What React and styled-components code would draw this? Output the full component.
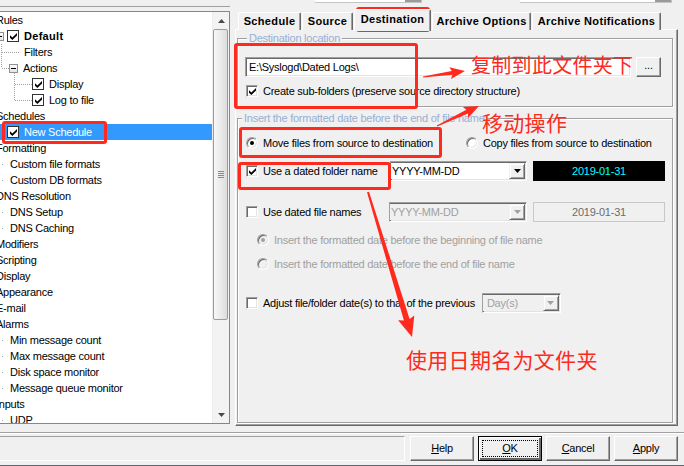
import React from "react";
import styled, { createGlobalStyle } from "styled-components";

const RED = "#ff2a1e";

const GlobalStyle = createGlobalStyle`
  html, body {
    margin: 0;
    padding: 0;
    background: #f0f0f0;
  }
  body {
    font-family: "Liberation Sans", Arial, sans-serif;
    font-size: 11px;
    letter-spacing: -0.25px;
    color: #000;
  }
  * {
    box-sizing: border-box;
  }
`;

const Window = styled.div`
  position: relative;
  width: 684px;
  height: 466px;
  overflow: hidden;
  background: #f0f0f0;
  display: flex;
  flex-direction: column;
`;

const Main = styled.div`
  display: flex;
  height: 426px;
`;

/* ---------- left tree ---------- */

const LeftColumn = styled.div`
  width: 230px;
  display: flex;
  flex-direction: column;
`;

const TopRule = styled.div`
  height: 7px;
  border-bottom: 1px solid #a0a0a0;
  margin-bottom: 4px;
`;

const Tree = styled.div`
  margin-left: -2px;
  width: 232px;
  height: 413px;
  display: flex;
  background: #fff;
  border: 1px solid #828790;
`;

const TreeList = styled.div`
  position: relative;
  flex: 1;
  overflow: hidden;
`;

const TreeRow = styled.div`
  height: 16px;
  display: flex;
  align-items: center;
  white-space: nowrap;
  background: ${(p) => (p.$selected ? "#3399ff" : "transparent")};
  color: ${(p) => (p.$selected ? "#fff" : "#000")};
`;

const Indent = styled.span`
  width: 0;
  margin-left: ${(p) => p.$x}px;
`;

const Expander = styled.span`
  position: relative;
  flex: none;
  width: 9px;
  height: 9px;
  margin-right: ${(p) => p.$gap}px;
  border: 1px solid #919191;
  background: linear-gradient(#fff, #e4e4e4);
  &::after {
    content: "";
    position: absolute;
    left: 1px;
    top: 3px;
    width: 5px;
    height: 1px;
    background: #000;
  }
`;

const TreeCheck = styled.span`
  flex: none;
  width: 12px;
  height: 12px;
  margin-right: 5px;
  border: 1px solid #333;
  background: #fff;
  display: flex;
  align-items: center;
  justify-content: center;
`;

const TreeLabel = styled.span`
  line-height: 16px;
  font-weight: ${(p) => (p.$bold ? "bold" : "normal")};
  letter-spacing: ${(p) => (p.$bold ? "0.3px" : "-0.25px")};
`;

const Guides = styled.svg`
  position: absolute;
  left: 0;
  top: 0;
  pointer-events: none;
`;

const ScrollBar = styled.div`
  width: 17px;
  display: flex;
  flex-direction: column;
  background: #f3f3f3;
  border-left: 1px solid #ececec;
`;

const ScrollArrow = styled.div`
  height: 17px;
  flex: none;
  display: flex;
  align-items: center;
  justify-content: center;
`;

const ScrollTrack = styled.div`
  flex: 1;
  padding: 0 1px 0 0;
`;

const Thumb = styled.div`
  height: 291px;
  border: 1px solid #9b9b9b;
  border-radius: 2px;
  background: linear-gradient(to right, #f7f7f7, #ececec 45%, #dcdcdc);
  display: flex;
  align-items: center;
  justify-content: center;
`;

const Grip = styled.div`
  width: 6px;
  height: 7px;
  background: repeating-linear-gradient(#8a8a8a 0 1px, transparent 1px 2px);
`;

/* ---------- right side ---------- */

const RightColumn = styled.div`
  margin-left: 5px;
  width: 443px;
  display: flex;
  flex-direction: column;
`;

const TopCombos = styled.div`
  height: 8px;
  display: flex;
  align-items: flex-start;
`;

const CutCombo = styled.div`
  margin-left: ${(p) => p.$offset}px;
  width: ${(p) => p.$w}px;
  height: 3px;
  background: #fff;
  border-bottom: 1px solid #c4c4c4;
  border-right: 1px solid #c4c4c4;
  display: flex;
  justify-content: flex-end;
`;

const CutButton = styled.div`
  width: 16px;
  height: 2px;
  background: #9a9a9a;
`;

const TabStrip = styled.div`
  height: 22px;
  display: flex;
  align-items: flex-end;
  gap: 1px;
  padding-left: 3px;
`;

const Tab = styled.div`
  position: relative;
  z-index: ${(p) => (p.$active ? 1 : 0)};
  width: ${(p) => p.$w}px;
  height: ${(p) => (p.$active ? 22 : 18)}px;
  margin-bottom: ${(p) => (p.$active ? -1 : 0)}px;
  padding-top: ${(p) => (p.$active ? 3 : 2)}px;
  background: #f0f0f0;
  border-top: 1px solid #fff;
  border-left: 1px solid #fff;
  border-right: 1px solid #696969;
  border-radius: 2px 2px 0 0;
  box-shadow: inset -1px 0 0 #a0a0a0;
  font-weight: bold;
  letter-spacing: 0.35px;
  text-align: center;
  line-height: 13px;
  white-space: nowrap;
`;

const TabPage = styled.div`
  flex: 1;
  margin-top: -1px;
  border-top: 1px solid #fff;
  border-left: 1px solid #fff;
  border-right: 1px solid #696969;
  border-bottom: 1px solid #696969;
  box-shadow: inset -1px -1px 0 #a0a0a0;
  display: flex;
  flex-direction: column;
  padding: 0 4px 2px 1px;
`;

const Group = styled.div`
  position: relative;
  flex: ${(p) => (p.$grow ? 1 : "none")};
  margin-top: ${(p) => p.$mt}px;
  padding: ${(p) => p.$pad};
  border: 1px solid #a0a0a0;
  box-shadow: inset 1px 1px 0 #fff, 1px 1px 0 #fff;
  display: flex;
  flex-direction: column;
`;

const GroupTitle = styled.span`
  position: absolute;
  top: -8px;
  left: ${(p) => p.$left}px;
  padding: 0 2px;
  background: #f0f0f0;
  color: #97afd4;
  line-height: 14px;
  white-space: nowrap;
`;

const PathRow = styled.div`
  display: flex;
  height: 20px;
  gap: 5px;
`;

const TextField = styled.div`
  width: 386px;
  height: 20px;
  padding: 0 0 0 3px;
  background: #fff;
  border: 1px solid;
  border-color: #a0a0a0 #fff #fff #a0a0a0;
  box-shadow: inset 1px 1px 0 #696969, inset -1px -1px 0 #e3e3e3;
  line-height: 18px;
  white-space: nowrap;
`;

const SmallButton = styled.div`
  width: 25px;
  height: 20px;
  border: 1px solid;
  border-color: #fff #696969 #696969 #fff;
  box-shadow: inset -1px -1px 0 #a0a0a0;
  text-align: center;
  line-height: 15px;
`;

const Row = styled.div`
  display: flex;
  align-items: center;
  height: ${(p) => p.$h || 14}px;
  margin-top: ${(p) => p.$mt || 0}px;
  padding-left: ${(p) => p.$pl || 0}px;
`;

const OptionGrid = styled.div`
  display: grid;
  grid-template-columns: 220px auto;
  align-items: center;
  height: 14px;
`;

const Choice = styled.label`
  flex: none;
  display: flex;
  align-items: center;
  gap: 5px;
  width: ${(p) => (p.$w ? `${p.$w}px` : "auto")};
  color: ${(p) => (p.$disabled ? "#a0a0a0" : "#000")};
  white-space: nowrap;
`;

const CheckBox = styled.span`
  flex: none;
  width: 12px;
  height: 12px;
  background: #fff;
  border: 1px solid;
  border-color: #a0a0a0 #fff #fff #a0a0a0;
  box-shadow: inset 1px 1px 0 #696969, inset -1px -1px 0 #e3e3e3;
  display: flex;
  align-items: center;
  justify-content: center;
`;

const Radio = styled.span`
  position: relative;
  flex: none;
  width: 12px;
  height: 12px;
  border-radius: 50%;
  background: ${(p) => (p.$disabled ? "#f0f0f0" : "#fff")};
  border: 1px solid;
  border-color: #a0a0a0 #fff #fff #a0a0a0;
  box-shadow: inset 1px 1px 0 #696969, inset -1px -1px 0 #e3e3e3;
  &::after {
    content: "";
    display: ${(p) => (p.$on ? "block" : "none")};
    position: absolute;
    left: 3px;
    top: 3px;
    width: 4px;
    height: 4px;
    border-radius: 50%;
    background: ${(p) => (p.$disabled ? "#a0a0a0" : "#000")};
  }
`;

const Combo = styled.div`
  flex: none;
  width: ${(p) => p.$w}px;
  height: 20px;
  margin-left: ${(p) => p.$ml || 0}px;
  display: flex;
  background: ${(p) => (p.$disabled ? "#f0f0f0" : "#fff")};
  border: 1px solid;
  border-color: #a0a0a0 #fff #fff #a0a0a0;
  box-shadow: inset 1px 1px 0 #696969, inset -1px -1px 0 #e3e3e3;
  padding: 1px 1px 1px 0;
`;

const ComboText = styled.span`
  flex: 1;
  padding-left: ${(p) => p.$pl || 1}px;
  line-height: 16px;
  color: ${(p) => (p.$disabled ? "#a0a0a0" : "#000")};
  background: ${(p) => (p.$disabled ? "#f0f0f0" : "#fff")};
  overflow: hidden;
  white-space: nowrap;
`;

const DropButton = styled.span`
  flex: none;
  width: 16px;
  display: flex;
  align-items: center;
  justify-content: center;
  background: #f0f0f0;
  border: 1px solid;
  border-color: #f0f0f0 #696969 #696969 #f0f0f0;
  box-shadow: inset 1px 1px 0 #fff, inset -1px -1px 0 #a0a0a0;
`;

const DateBox = styled.div`
  flex: none;
  width: 132px;
  height: 20px;
  margin-left: 6px;
  background: ${(p) => (p.$active ? "#000" : "#f0f0f0")};
  color: ${(p) => (p.$active ? "#00ffff" : "#6d6d6d")};
  border: 1px solid ${(p) => (p.$active ? "#000" : "#c8c8c8")};
  text-align: center;
  line-height: 18px;
`;

/* ---------- footer ---------- */

const Footer = styled.div`
  flex: 1;
  display: flex;
  flex-direction: column;
`;

const Divider = styled.div`
  margin-top: 6px;
  border-top: 1px solid #a0a0a0;
  border-bottom: 1px solid #fff;
`;

const ButtonRow = styled.div`
  display: flex;
  height: 25px;
  margin-top: 2px;
  gap: 4px;
`;

const StatusBox = styled.div`
  width: 407px;
  margin: 0 1px 0 -2px;
  border: 1px solid;
  border-color: #a0a0a0 #fff #fff #a0a0a0;
`;

const DialogButton = styled.div`
  position: relative;
  width: 64px;
  height: 25px;
  border: 1px solid;
  border-color: ${(p) => (p.$focused ? "#000" : "#fff #696969 #696969 #fff")};
  box-shadow: ${(p) =>
    p.$focused
      ? "inset 1px 1px 0 #fff, inset -2px -2px 0 #696969"
      : "inset -1px -1px 0 #a0a0a0"};
  text-align: center;
  line-height: 22px;
  &::after {
    content: "";
    display: ${(p) => (p.$focused ? "block" : "none")};
    position: absolute;
    inset: 3px 3px 3px 3px;
    border: 1px dotted #000;
  }
`;

const BottomEdge = styled.div`
  margin-top: auto;
  height: 1px;
  background: #5f6670;
`;

/* ---------- red annotations ---------- */

const RedFrame = styled.div`
  position: absolute;
  left: ${(p) => p.$x}px;
  top: ${(p) => p.$y}px;
  width: ${(p) => p.$w}px;
  height: ${(p) => p.$h}px;
  border: 3px solid ${RED};
  border-radius: 3px;
  pointer-events: none;
`;

const RedNote = styled.div`
  position: absolute;
  left: ${(p) => p.$x}px;
  top: ${(p) => p.$y}px;
  font-family: "Noto Sans CJK SC", "Noto Sans", sans-serif;
  font-size: ${(p) => p.$size}px;
  line-height: 1;
  letter-spacing: 0.3px;
  color: ${RED};
  white-space: nowrap;
`;

const ArrowLayer = styled.svg`
  position: absolute;
  left: 0;
  top: 0;
  pointer-events: none;
`;

/* ---------- data ---------- */

const treeItems = [
  { label: "Rules", x: -3 },
  { label: "Default", x: -4, expander: 3, check: true, bold: true },
  { label: "Filters", x: 25 },
  { label: "Actions", x: 10, expander: 5 },
  { label: "Display", x: 33, check: true },
  { label: "Log to file", x: 33, check: true },
  { label: "Schedules", x: -3 },
  { label: "New Schedule", x: 8, check: true, selected: true },
  { label: "Formatting", x: -3 },
  { label: "Custom file formats", x: 11, dot: true },
  { label: "Custom DB formats", x: 11, dot: true },
  { label: "DNS Resolution", x: -3 },
  { label: "DNS Setup", x: 11, dot: true },
  { label: "DNS Caching", x: 11, dot: true },
  { label: "Modifiers", x: -3 },
  { label: "Scripting", x: -3 },
  { label: "Display", x: -3 },
  { label: "Appearance", x: -3 },
  { label: "E-mail", x: -3 },
  { label: "Alarms", x: -3 },
  { label: "Min message count", x: 11, dot: true },
  { label: "Max message count", x: 11, dot: true },
  { label: "Disk space monitor", x: 11, dot: true },
  { label: "Message queue monitor", x: 11, dot: true },
  { label: "Inputs", x: -3 },
  { label: "UDP", x: 11, dot: true },
];

const tabs = [
  { label: "Schedule", w: 63 },
  { label: "Source", w: 51 },
  { label: "Destination", w: 77, active: true },
  { label: "Archive Options", w: 99 },
  { label: "Archive Notifications", w: 129 },
];

function arrowPoints(x1, y1, x2, y2, tail, shaft, head, headLen) {
  const len = Math.hypot(x2 - x1, y2 - y1);
  const ux = (x2 - x1) / len;
  const uy = (y2 - y1) / len;
  const nx = -uy;
  const ny = ux;
  const bx = x2 - ux * headLen;
  const by = y2 - uy * headLen;
  const pts = [
    [x1 + (nx * tail) / 2, y1 + (ny * tail) / 2],
    [bx + (nx * shaft) / 2, by + (ny * shaft) / 2],
    [bx - ux * 2 + (nx * head) / 2, by - uy * 2 + (ny * head) / 2],
    [x2, y2],
    [bx - ux * 2 - (nx * head) / 2, by - uy * 2 - (ny * head) / 2],
    [bx - (nx * shaft) / 2, by - (ny * shaft) / 2],
    [x1 - (nx * tail) / 2, y1 - (ny * tail) / 2],
  ];
  return pts.map((p) => p.map((v) => v.toFixed(1)).join(",")).join(" ");
}

/* ---------- small drawings ---------- */

const CheckMark = ({ color = "#000" }) => (
  <svg width="7" height="7" viewBox="0 0 7 7">
    <polygon points="0,2.3 2.4,4.6 7,0 7,2.4 2.4,7 0,4.7" fill={color} />
  </svg>
);

const DownTriangle = ({ color = "#000" }) => (
  <svg width="7" height="4" viewBox="0 0 7 4">
    <polygon points="0,0 7,0 3.5,4" fill={color} />
  </svg>
);

const UpTriangle = () => (
  <svg width="7" height="4" viewBox="0 0 7 4">
    <polygon points="0,4 7,4 3.5,0" fill="#4a4a4a" />
  </svg>
);

function TreeGuides() {
  const dotted = { stroke: "#a0a0a0", strokeWidth: 1, strokeDasharray: "1 1" };
  const dotRows = treeItems
    .map((item, i) => (item.dot ? i : -1))
    .filter((i) => i >= 0);
  return (
    <Guides width="212" height="411">
      <line x1="2.5" y1="32" x2="2.5" y2="56" {...dotted} />
      <line x1="3" y1="40.5" x2="20" y2="40.5" {...dotted} />
      <line x1="3" y1="56.5" x2="11" y2="56.5" {...dotted} />
      <line x1="15.5" y1="61" x2="15.5" y2="88" {...dotted} />
      <line x1="16" y1="72.5" x2="34" y2="72.5" {...dotted} />
      <line x1="16" y1="88.5" x2="34" y2="88.5" {...dotted} />
      {dotRows.map((i) => (
        <rect key={i} x="3" y={8 + 16 * i} width="1" height="1" fill="#a0a0a0" />
      ))}
    </Guides>
  );
}

function CheckOption({ checked, children, width }) {
  return (
    <Choice $w={width}>
      <CheckBox>{checked && <CheckMark />}</CheckBox>
      <span>{children}</span>
    </Choice>
  );
}

function RadioOption({ on, disabled, children }) {
  return (
    <Choice $disabled={disabled}>
      <Radio $on={on} $disabled={disabled} />
      <span>{children}</span>
    </Choice>
  );
}

function DropDown({ value, width, disabled, ml }) {
  return (
    <Combo $w={width} $disabled={disabled} $ml={ml}>
      <ComboText $disabled={disabled} $pl={ml ? 4 : 1}>
        {value}
      </ComboText>
      <DropButton>
        <DownTriangle color={disabled ? "#a0a0a0" : "#000"} />
      </DropButton>
    </Combo>
  );
}

export default function App() {
  return (
    <Window>
      <GlobalStyle />
      <Main>
        <LeftColumn>
          <TopRule />
          <Tree>
            <TreeList>
              {treeItems.map((item, i) => (
                <TreeRow key={i} $selected={item.selected}>
                  <Indent $x={item.x} />
                  {item.expander && <Expander $gap={item.expander} />}
                  {item.check && (
                    <TreeCheck>
                      <CheckMark />
                    </TreeCheck>
                  )}
                  <TreeLabel $bold={item.bold}>{item.label}</TreeLabel>
                </TreeRow>
              ))}
              <TreeGuides />
            </TreeList>
            <ScrollBar>
              <ScrollArrow>
                <UpTriangle />
              </ScrollArrow>
              <ScrollTrack>
                <Thumb>
                  <Grip />
                </Thumb>
              </ScrollTrack>
              <ScrollArrow>
                <DownTriangle color="#4a4a4a" />
              </ScrollArrow>
            </ScrollBar>
          </Tree>
        </LeftColumn>

        <RightColumn>
          <TopCombos>
            <CutCombo $offset={80} $w={107}>
              <CutButton />
            </CutCombo>
            <CutCombo $offset={98} $w={152}>
              <CutButton />
            </CutCombo>
          </TopCombos>
          <TabStrip>
            {tabs.map((t) => (
              <Tab key={t.label} $w={t.w} $active={t.active}>
                {t.label}
              </Tab>
            ))}
          </TabStrip>
          <TabPage>
            <Group $mt={8} $pad="18px 10px 8px 7px">
              <GroupTitle $left={9}>Destination location</GroupTitle>
              <PathRow>
                <TextField>E:\Syslogd\Dated Logs\</TextField>
                <SmallButton>...</SmallButton>
              </PathRow>
              <Row $mt={7} $pl={1}>
                <CheckOption checked>
                  Create sub-folders (preserve source directory structure)
                </CheckOption>
              </Row>
            </Group>

            <Group $mt={11} $grow $pad="17px 6px 0 8px">
              <GroupTitle $left={4}>
                Insert the formatted date before the end of file name
              </GroupTitle>
              <OptionGrid>
                <RadioOption on>Move files from source to destination</RadioOption>
                <RadioOption>Copy files from source to destination</RadioOption>
              </OptionGrid>
              <Row $h={20} $mt={11}>
                <CheckOption checked width={144}>
                  Use a dated folder name
                </CheckOption>
                <DropDown value="YYYY-MM-DD" width={137} />
                <DateBox $active>2019-01-31</DateBox>
              </Row>
              <Row $h={20} $mt={21}>
                <CheckOption width={143}>Use dated file names</CheckOption>
                <DropDown value="YYYY-MM-DD" width={138} disabled />
                <DateBox>2019-01-31</DateBox>
              </Row>
              <Row $mt={11} $pl={11}>
                <RadioOption on disabled>
                  Insert the formatted date before the beginning of file name
                </RadioOption>
              </Row>
              <Row $mt={10} $pl={11}>
                <RadioOption disabled>
                  Insert the formatted date before the end of file name
                </RadioOption>
              </Row>
              <Row $h={21} $mt={21}>
                <CheckOption>
                  Adjust file/folder date(s) to that of the previous
                </CheckOption>
                <DropDown value="Day(s)" width={79} disabled ml={7} />
              </Row>
            </Group>
          </TabPage>
        </RightColumn>
      </Main>

      <Footer>
        <Divider />
        <ButtonRow>
          <StatusBox />
          <DialogButton>
            <u>H</u>elp
          </DialogButton>
          <DialogButton $focused>
            <u>O</u>K
          </DialogButton>
          <DialogButton>
            <u>C</u>ancel
          </DialogButton>
          <DialogButton>
            <u>A</u>pply
          </DialogButton>
        </ButtonRow>
        <BottomEdge />
      </Footer>

      <RedFrame $x={2} $y={121} $w={105} $h={23} />
      <RedFrame $x={356} $y={7} $w={74} $h={25} />
      <RedFrame $x={234} $y={43} $w={184} $h={66} />
      <RedFrame $x={239} $y={127} $w={203} $h={31} />
      <RedFrame $x={238} $y={162} $w={153} $h={28} />

      <ArrowLayer width="684" height="466">
        <polygon points={arrowPoints(423, 77, 465, 71, 1, 4, 12, 13)} fill={RED} />
        <polygon points={arrowPoints(437, 126, 479, 106, 1, 4, 12, 13)} fill={RED} />
        <polygon points={arrowPoints(368, 192, 412, 337, 2, 6, 17, 18)} fill={RED} />
      </ArrowLayer>

      <RedNote $x={471} $y={55} $size={20}>
        复制到此文件夹下
      </RedNote>
      <RedNote $x={482} $y={112} $size={21}>
        移动操作
      </RedNote>
      <RedNote $x={406} $y={349} $size={21}>
        使用日期名为文件夹
      </RedNote>
    </Window>
  );
}
